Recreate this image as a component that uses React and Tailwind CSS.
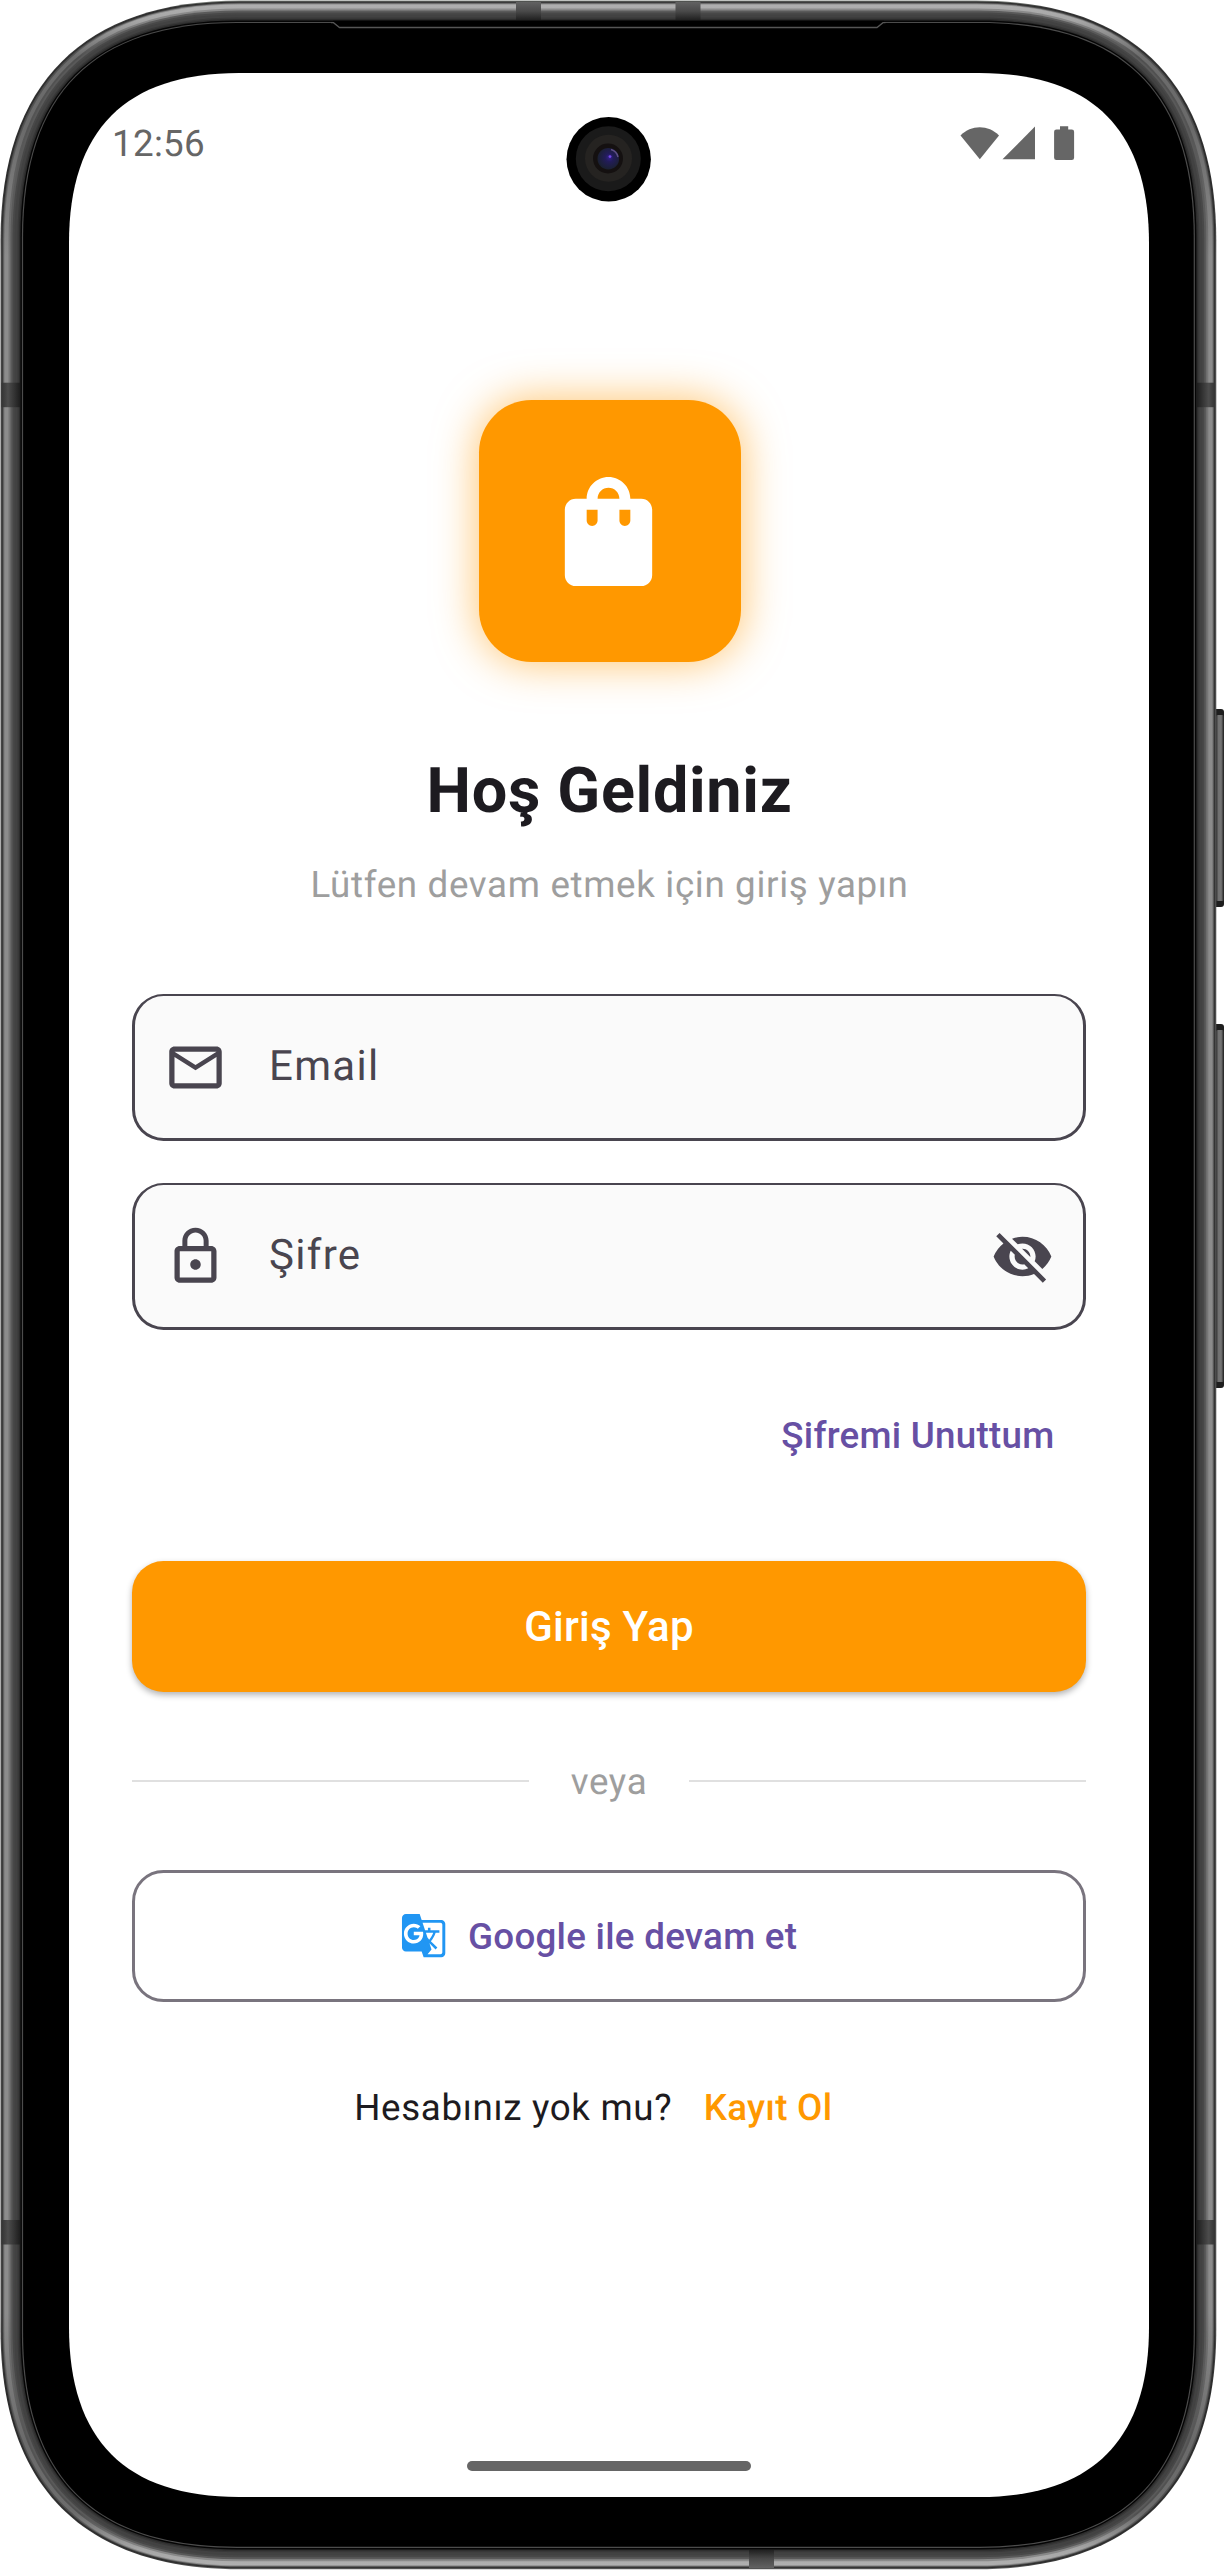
import {
  MdGTranslate,
  MdLockOutline,
  MdOutlineEmail,
  MdShoppingBag,
  MdVisibilityOff,
} from "react-icons/md";

// Closed path with continuous-curvature corners.
function squircle(x0, y0, x1, y1, len, ctl) {
  return [
    `M${x0} ${y0 + len}`,
    `C${x0} ${y0 + ctl} ${x0 + ctl} ${y0} ${x0 + len} ${y0}`,
    `H${x1 - len}`,
    `C${x1 - ctl} ${y0} ${x1} ${y0 + ctl} ${x1} ${y0 + len}`,
    `V${y1 - len}`,
    `C${x1} ${y1 - ctl} ${x1 - ctl} ${y1} ${x1 - len} ${y1}`,
    `H${x0 + len}`,
    `C${x0 + ctl} ${y1} ${x0} ${y1 - ctl} ${x0} ${y1 - len}`,
    "Z",
  ].join("");
}

const bodyPath = (inset) =>
  squircle(0.5 + inset, 0.5 + inset, 1216.3 - inset, 2569.3 - inset, 240 - inset * 1.15, 83 - inset * 0.56);

const metal = [
  [0, "url(#rim)"],
  [1, "#2c2c2c"],
  [2, "#4c4c4c"],
  [3, "url(#shineSoft)"],
  [4, "url(#shine)"],
  [8, "url(#shineSoft)"],
  [10, "#5a5a5a"],
  [12, "#484848"],
  [14, "#424242"],
  [17, "#383838"],
  [18.5, "#2c2c2c"],
  [19.9, "#050505"],
  [21.4, "#4c4c4c"],
  [22.6, "#000000"],
];

const sideKeys = [
  { y: 709, height: 198 },
  { y: 1024, height: 364 },
];

function DeviceFrame() {
  return (
    <svg className="absolute inset-0" width="1224" height="2570" viewBox="0 0 1224 2570" aria-hidden="true">
      <defs>
        <linearGradient id="rim" gradientUnits="userSpaceOnUse" x1="0" y1="0" x2="0" y2="2570">
          <stop offset="0" stopColor="#848a83" />
          <stop offset="0.003" stopColor="#3a3a3a" />
          <stop offset="0.07" stopColor="#2c2c2c" />
          <stop offset="0.1" stopColor="#5c5c5c" />
          <stop offset="0.9" stopColor="#5c5c5c" />
          <stop offset="0.93" stopColor="#2c2c2c" />
          <stop offset="0.997" stopColor="#3a3a3a" />
          <stop offset="1" stopColor="#6a6a6a" />
        </linearGradient>
        <linearGradient id="shine" gradientUnits="userSpaceOnUse" x1="0" y1="0" x2="0" y2="2570">
          <stop offset="0" stopColor="#b2b2b2" />
          <stop offset="0.008" stopColor="#a6a6a6" />
          <stop offset="0.022" stopColor="#6c6c6c" />
          <stop offset="0.05" stopColor="#6a6a6a" />
          <stop offset="0.1" stopColor="#8c8c8c" />
          <stop offset="0.9" stopColor="#8c8c8c" />
          <stop offset="0.95" stopColor="#6a6a6a" />
          <stop offset="0.978" stopColor="#6c6c6c" />
          <stop offset="0.992" stopColor="#a6a6a6" />
          <stop offset="1" stopColor="#b2b2b2" />
        </linearGradient>
        <linearGradient id="shineSoft" gradientUnits="userSpaceOnUse" x1="0" y1="0" x2="0" y2="2570">
          <stop offset="0" stopColor="#8e8e8e" />
          <stop offset="0.008" stopColor="#868686" />
          <stop offset="0.022" stopColor="#505050" />
          <stop offset="0.05" stopColor="#545454" />
          <stop offset="0.1" stopColor="#767676" />
          <stop offset="0.9" stopColor="#767676" />
          <stop offset="0.95" stopColor="#545454" />
          <stop offset="0.978" stopColor="#505050" />
          <stop offset="0.992" stopColor="#868686" />
          <stop offset="1" stopColor="#8e8e8e" />
        </linearGradient>
        <linearGradient id="key" x1="0" y1="0" x2="1" y2="0">
          <stop offset="0" stopColor="#2a2a2a" />
          <stop offset="0.3" stopColor="#707070" />
          <stop offset="0.65" stopColor="#747474" />
          <stop offset="1" stopColor="#1c1c1c" />
        </linearGradient>
        <linearGradient id="bandV" x1="0" y1="0" x2="0" y2="1">
          <stop offset="0" stopColor="#626262" />
          <stop offset="0.5" stopColor="#4a4a4a" />
          <stop offset="1" stopColor="#202020" />
        </linearGradient>
        <linearGradient id="bandH" x1="0" y1="0" x2="1" y2="0">
          <stop offset="0" stopColor="#333333" />
          <stop offset="0.35" stopColor="#4c4c4c" />
          <stop offset="1" stopColor="#1d1d1d" />
        </linearGradient>
        <radialGradient id="lens" cx="0.55" cy="0.45" r="0.55">
          <stop offset="0" stopColor="#33228a" />
          <stop offset="0.35" stopColor="#221c58" />
          <stop offset="1" stopColor="#1a2030" />
        </radialGradient>
      </defs>
      {sideKeys.map(({ y, height }) => (
        <g key={y}>
          <rect x="1212" y={y} width="12" height={height} rx="3" fill="#1e1e1e" />
          <rect x="1216" y={y + 6} width="8" height={height - 12} rx="1.5" fill="url(#key)" />
        </g>
      ))}
      {metal.map(([inset, fill]) => (
        <path key={inset} d={bodyPath(inset)} fill={fill} />
      ))}
      {[516, 675.5].map((x) => (
        <rect key={x} x={x} y="2" width="25" height="18" fill="url(#bandV)" />
      ))}
      <rect x="749" y="2550" width="25" height="18" fill="url(#bandV)" transform="rotate(180 761.5 2559)" />
      {[382.7, 2220].map((y) => (
        <g key={y}>
          <rect x="1.5" y={y} width="18.5" height="24.5" fill="url(#bandH)" />
          <rect x="1197" y={y} width="18" height="24.5" fill="url(#bandH)" transform={`rotate(180 1206 ${y + 12.25})`} />
        </g>
      ))}
      <path d="M333 20.7h551v3H333z" fill="#000" />
      <path d="M331 22.7h2.5l6 4.8h537.5l6-4.8h2.5" fill="none" stroke="#555" strokeWidth="1.3" />
      <path d={squircle(69, 73, 1149, 2497, 170, 56.7)} fill="#fff" />
      <g>
        <circle cx="608.7" cy="159.3" r="42.2" fill="#000" />
        <circle cx="608.3" cy="158.7" r="32.5" fill="#1a1a1a" />
        <circle cx="608.5" cy="158.3" r="23.5" fill="#252321" />
        <circle cx="608" cy="158.5" r="15" fill="#141010" />
        <circle cx="608.3" cy="158.7" r="10.8" fill="url(#lens)" />
        <circle cx="610" cy="156.6" r="1.4" fill="#7548e6" />
        <path d="M611 149.5a10 10 0 0 1 7 7.5" stroke="#5f4f86" strokeWidth="1.5" fill="none" />
      </g>
    </svg>
  );
}

function StatusBar() {
  return (
    <div className="flex h-[141px] items-center justify-between pr-[74px] pl-[43px] text-[#666666]">
      <span className="text-[36.75px] leading-[48px] tracking-[0.3px]">12:56</span>
      <svg width="115" height="36" viewBox="0 0 115 36" fill="currentColor" aria-hidden="true">
        <path d="M0.5 9.5C11 -1.5 28.5 -1.5 39 9.5L19.8 33.2Z" />
        <path d="M75 0.6V33.3H42.5Z" />
        <path d="M100 0.3h8.2v3.2h3.6a2.3 2.3 0 0 1 2.3 2.3v26a2.3 2.3 0 0 1-2.3 2.3h-15.4a2.3 2.3 0 0 1-2.3-2.3v-26a2.3 2.3 0 0 1 2.3-2.3h3.6z" />
      </svg>
    </div>
  );
}

function Field({ icon: Icon, label, trailing }) {
  return (
    <div className="flex h-[147px] items-center rounded-[31.5px] border-[3px] border-t-2 border-[#49454f] bg-[#fafafa] pr-[29px] pl-[28.5px] text-[#49454f]">
      <Icon size={63} />
      <span className="ml-[42.5px] flex-1 pb-[2px] text-[42px] leading-[55px] tracking-[1.31px]">{label}</span>
      {trailing}
    </div>
  );
}

export default function App() {
  return (
    <div className="relative h-[2570px] w-[1224px] overflow-hidden bg-white font-['Roboto',sans-serif] antialiased [text-rendering:geometricPrecision]">
      <DeviceFrame />
      <div className="relative mx-auto flex h-full w-[1224px] flex-col pt-[73px] pr-[75px] pb-[73px] pl-[69px]">
        <StatusBar />
        <main className="flex flex-1 flex-col px-[63px] pt-[186px]">
          <div className="ml-[1px] flex size-[262px] items-center justify-center self-center rounded-[52.5px] bg-[#ff9800] pr-[2px] shadow-[0_0_44px_rgba(255,152,0,0.6)]">
            <MdShoppingBag size={131} className="text-white" />
          </div>
          <h1 className="mt-[88px] pl-[1px] text-center text-[63px] leading-[83px] font-bold tracking-[0.66px] text-[#1d1b20]">
            Hoş Geldiniz
          </h1>
          <p className="mt-[28px] pl-[1px] text-center text-[36.75px] leading-[47px] tracking-[0.66px] text-[#9e9e9e]">
            Lütfen devam etmek için giriş yapın
          </p>
          <div className="mt-[86px] flex flex-col gap-[42px]">
            <Field icon={MdOutlineEmail} label="Email" />
            <Field icon={MdLockOutline} label="Şifre" trailing={<MdVisibilityOff size={63} />} />
          </div>
          <button className="mt-[82px] mr-[31.5px] self-end text-[36.75px] leading-[47px] font-medium tracking-[0.26px] text-[#6750a4]">
            Şifremi Unuttum
          </button>
          <button className="mt-[102px] h-[131px] rounded-[31.5px] bg-[#ff9800] text-[42px] leading-[56px] font-medium tracking-[0.26px] text-white shadow-[0_3px_6px_rgba(0,0,0,0.3)]">
            Giriş Yap
          </button>
          <div className="mt-[65px] flex h-[48px] items-center">
            <span className="h-[2px] flex-1 bg-[#e0e0e0]" />
            <span className="px-[42px] pt-px text-[36.75px] leading-[47px] tracking-[0.66px] text-[#9e9e9e]">veya</span>
            <span className="h-[2px] flex-1 bg-[#e0e0e0]" />
          </div>
          <button className="mt-[65px] flex h-[132px] items-center justify-center gap-[21px] rounded-[31.5px] border-[3px] border-[#79747e] pr-[21px] text-[36.75px] leading-[47px] font-medium tracking-[0.26px] text-[#6750a4]">
            <MdGTranslate size={47.25} className="text-[#2196f3]" />
            <span className="pt-px">Google ile devam et</span>
          </button>
          <div className="mt-[82px] flex items-center justify-center text-[36.75px] leading-[47px]">
            <span className="tracking-[0.66px] text-[#1d1b20]">Hesabınız yok mu?</span>
            <a className="mx-[31.5px] font-medium tracking-[0.26px] text-[#ff9800]">Kayıt Ol</a>
          </div>
        </main>
        <div className="mb-[26px] h-[10px] w-[284px] self-center rounded-full bg-[#666666]" />
      </div>
    </div>
  );
}
